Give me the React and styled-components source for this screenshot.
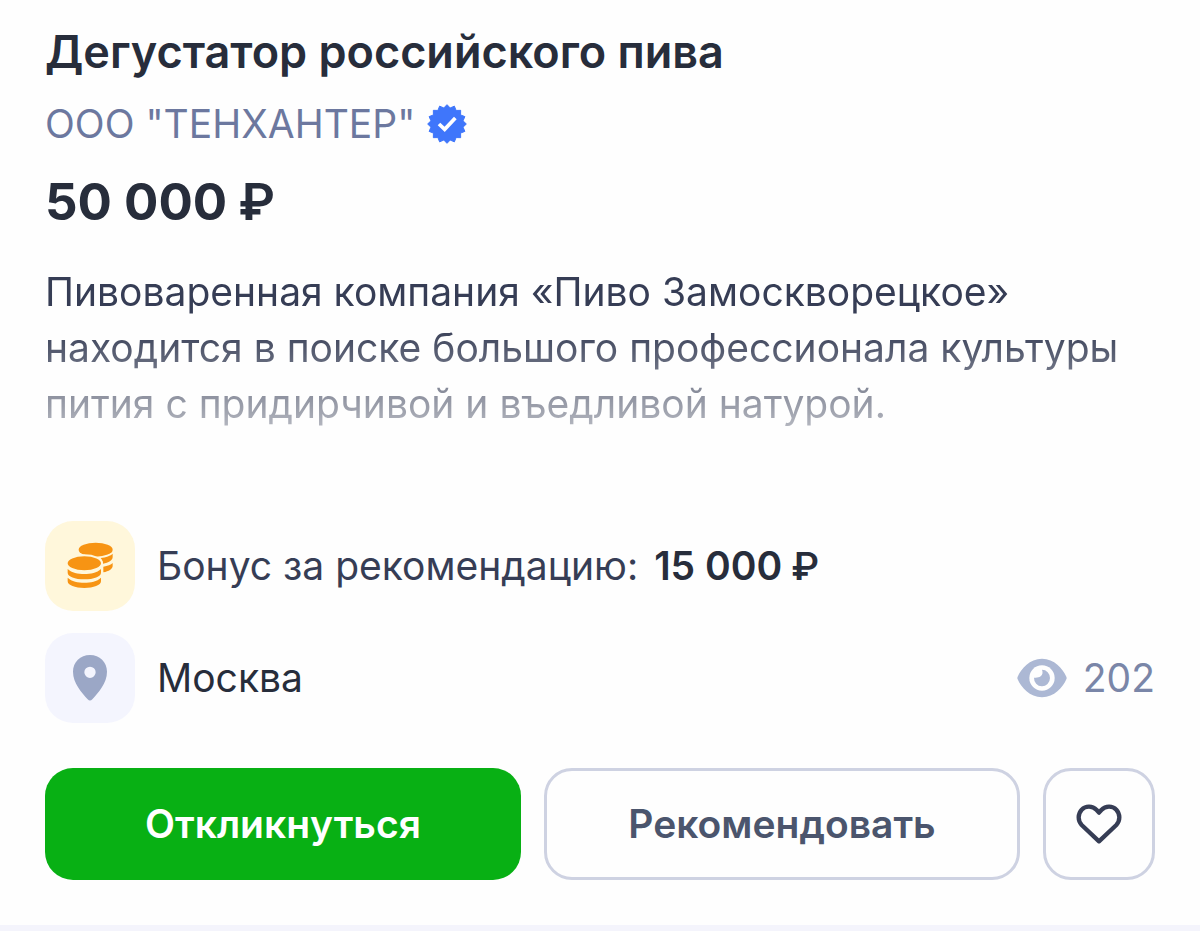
import React from "react";
import styled, { createGlobalStyle } from "styled-components";

const GlobalStyle = createGlobalStyle`
  * { box-sizing: border-box; }
  body {
    margin: 0;
    background: #f4f4fc;
    font-family: Inter, "Liberation Sans", sans-serif;
    color: #272d3b;
  }
`;

const Card = styled.article`
  display: flex;
  flex-direction: column;
  padding: 24px 45px 45px;
  background: #fefefe;
`;

const Title = styled.h1`
  margin: 0;
  font-size: 45px;
  line-height: 56px;
  font-weight: 600;
`;

const Company = styled.div`
  display: flex;
  align-items: center;
  gap: 12px;
  margin-top: 16px;
  font-size: 39px;
  line-height: 56px;
`;

const CompanyLink = styled.a`
  color: #6c789f;
  text-decoration: none;
`;

const Salary = styled.p`
  margin: 20px 0 0;
  font-size: 51px;
  line-height: 60px;
  font-weight: 700;
`;

const Currency = styled.span`
  font-family: Roboto, Inter, sans-serif;
  font-weight: ${(p) => p.$weight};
`;

const Description = styled.p`
  margin: 31px 0 33px;
  height: 224px;
  font-size: 39px;
  line-height: 56px;
  color: #363d55;
  mask-image: linear-gradient(to bottom, #000 28%, rgba(0, 0, 0, 0.5) 63%, transparent 100%);
`;

const Facts = styled.div`
  display: flex;
  flex-direction: column;
  gap: 22px;
`;

const Fact = styled.div`
  display: flex;
  align-items: center;
  gap: 22px;
  font-size: 39px;
  line-height: 56px;
`;

const Tile = styled.span`
  display: flex;
  width: 90px;
  height: 90px;
  border-radius: 28px;
  background: ${(p) => p.$color};
`;

const FactLabel = styled.span`
  color: #363d55;
`;

const Bonus = styled.strong`
  margin-left: 16px;
  font-weight: 600;
  color: #272d3b;
`;

const Views = styled.span`
  display: flex;
  align-items: center;
  gap: 16px;
  margin-left: auto;
  color: #7a86a8;
`;

const Actions = styled.div`
  display: grid;
  grid-template-columns: 1fr 1fr 112px;
  gap: 23px;
  margin-top: 45px;
`;

const Button = styled.button`
  display: flex;
  align-items: center;
  justify-content: center;
  height: 112px;
  padding: 0;
  border: ${(p) => (p.$primary ? "none" : "3px solid #ced2e2")};
  border-radius: 28px;
  background: ${(p) => (p.$primary ? "#08b014" : "#fefefe")};
  color: ${(p) => (p.$primary ? "#ffffff" : "#4b556d")};
  font-family: inherit;
  font-size: 39px;
  line-height: 56px;
  font-weight: 600;
  cursor: pointer;
`;

const badgePoints = Array.from({ length: 32 }, (_, i) => {
  const r = i % 2 ? 49 : 58;
  const a = (i * Math.PI) / 16;
  return `${(60 + r * Math.sin(a)).toFixed(1)},${(60 - r * Math.cos(a)).toFixed(1)}`;
}).join(" ");

const VerifiedIcon = () => (
  <svg width="40" height="40" viewBox="0 0 120 120" role="img" aria-label="Проверено">
    <polygon points={badgePoints} fill="#3f76fb" stroke="#3f76fb" strokeWidth="3" strokeLinejoin="round" />
    <path d="M36 60l17 16 32-34" fill="none" stroke="#fff" strokeWidth="11" />
  </svg>
);

const CoinsIcon = () => (
  <svg width="90" height="90" viewBox="45 36 270 270" aria-hidden="true">
    <g fill="#f79413">
      <ellipse cx="197" cy="122" rx="51" ry="21" />
      <path d="M212 147c16-2 30-7 36-13v10c0 10-12 17-29 20-1-7-3-12-7-17z" />
      <path d="M220 173c13-2 23-6 28-11v9c0 9-12 16-28 19z" />
      <ellipse cx="163" cy="163" rx="53" ry="24" stroke="#fff7db" strokeWidth="6" />
      <path d="M113 180c12 12 31 15 50 15s38-3 50-15v11c0 12-22 20-50 20s-50-8-50-20z" />
      <path d="M113 206c12 12 31 15 50 15s38-3 50-15v11c0 12-22 20-50 20s-50-8-50-20z" />
    </g>
  </svg>
);

const PinIcon = () => (
  <svg width="90" height="90" viewBox="45 371 270 270" aria-hidden="true">
    <path
      fill="#9ba7c6"
      fillRule="evenodd"
      d="M180 437c-29 0-51 22-51 50 0 35 26 62 44 83q7 7 14 0c18-21 44-48 44-83 0-28-22-50-51-50zm0 35a17 17 0 1 1 0 34 17 17 0 0 1 0-34z"
    />
  </svg>
);

const EyeIcon = () => (
  <svg width="50" height="40" viewBox="53 55 150 120" role="img" aria-label="Просмотры">
    <path fill="#acb8d4" d="M128 57c37 0 62 29 73 54q2 4 0 8c-11 25-36 54-73 54s-62-29-73-54q-2-4 0-8c11-25 36-54 73-54z" />
    <circle cx="128" cy="115" r="38" fill="#fefefe" />
    <path fill="#acb8d4" d="M128 90c3 9 2 15-4 20-6 4-12 5-20 4a24 25 0 1 0 24-24z" />
  </svg>
);

const HeartIcon = () => (
  <svg width="46" height="40" viewBox="228 164 138 120" aria-hidden="true">
    <path
      fill="none"
      stroke="#363d55"
      strokeWidth="13"
      strokeLinejoin="round"
      d="M297 190l-7-8c-13-13-33-13-45-1-12 13-12 33 0 46l52 49 52-49c12-13 12-33 0-46-12-12-32-12-45 1z"
    />
  </svg>
);

export default function App() {
  return (
    <>
      <GlobalStyle />
      <Card>
        <Title>Дегустатор российского пива</Title>
        <Company>
          <CompanyLink href="#company">ООО "ТЕНХАНТЕР"</CompanyLink>
          <VerifiedIcon />
        </Company>
        <Salary>50 000 <Currency $weight={600}>₽</Currency></Salary>
        <Description>
          Пивоваренная компания «Пиво Замоскворецкое» находится в поиске большого профессионала культуры
          пития с придирчивой и въедливой натурой.
        </Description>
        <Facts>
          <Fact>
            <Tile $color="#fff7db"><CoinsIcon /></Tile>
            <FactLabel>
              Бонус за рекомендацию:<Bonus>15 000 <Currency $weight={500}>₽</Currency></Bonus>
            </FactLabel>
          </Fact>
          <Fact>
            <Tile $color="#f4f5fe"><PinIcon /></Tile>
            <span>Москва</span>
            <Views>
              <EyeIcon />
              <span>202</span>
            </Views>
          </Fact>
        </Facts>
        <Actions>
          <Button type="button" $primary>Откликнуться</Button>
          <Button type="button">Рекомендовать</Button>
          <Button type="button" aria-label="В избранное"><HeartIcon /></Button>
        </Actions>
      </Card>
    </>
  );
}
